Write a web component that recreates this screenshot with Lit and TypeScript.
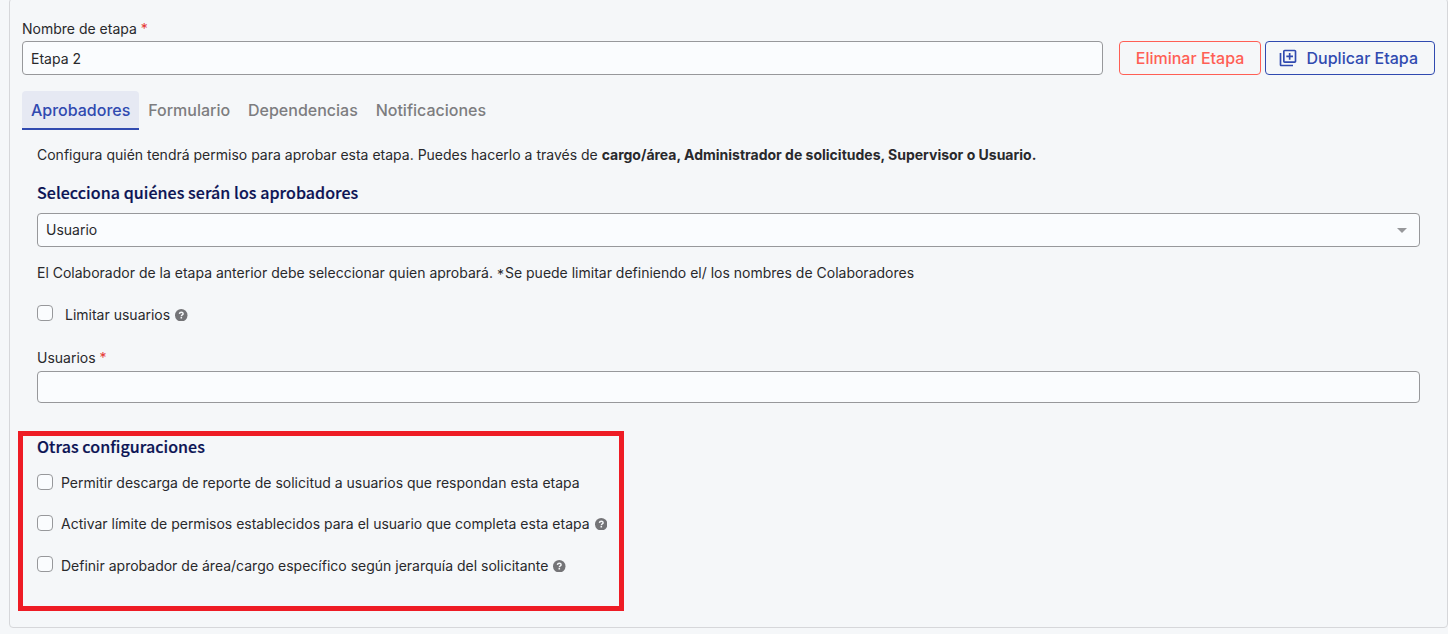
import { LitElement, html, css, svg, nothing } from 'lit';
import { customElement, property, state } from 'lit/decorators.js';
import { classMap } from 'lit/directives/class-map.js';

@customElement('check-option')
class CheckOption extends LitElement {
  @property() label = '';
  @property({ type: Boolean }) help = false;
  @property({ type: Boolean }) checked = false;

  static styles = css`
    :host {
      display: block;
    }

    .option {
      display: flex;
      align-items: flex-start;
      line-height: 20px;
    }

    .box {
      appearance: none;
      box-sizing: border-box;
      flex: none;
      width: 16px;
      height: 16px;
      margin: 0 var(--option-gap, 8px) 0 0;
      border: 1px solid #97989b;
      border-radius: 4px;
      background: #fafcfe;
    }

    .box:checked {
      background: #304ab0;
    }

    .text {
      margin-top: var(--option-shift, -1px);
      white-space: nowrap;
    }

    .help {
      flex: none;
      width: 12.5px;
      height: 12.5px;
      margin: calc(var(--option-shift, -1px) + 3.5px) 0 0 5px;
    }
  `;

  render() {
    return html`<label class="option">
      <input
        class="box"
        type="checkbox"
        .checked=${this.checked}
        @change=${this._toggle}
      />
      <span class="text">${this.label}</span>
      ${this.help
        ? html`<svg class="help" viewBox="0 0 12 12">
            <circle cx="6" cy="6" r="6" fill="#747477" />
            <path
              d="M4.2 4.6C4.4 3.6 5.1 3.1 6 3.1s1.8.5 1.8 1.5c0 1.1-1.7 1.1-1.7 2.3"
              fill="none"
              stroke="#f5f7f9"
              stroke-width="1.4"
            />
            <rect x="5.3" y="7.7" width="1.5" height="1.4" fill="#f5f7f9" />
          </svg>`
        : nothing}
    </label>`;
  }

  _toggle(event: Event) {
    this.checked = (event.target as HTMLInputElement).checked;
  }
}

@customElement('app-root')
class AppRoot extends LitElement {
  @state() activeTab = 'Aprobadores';

  tabs = ['Aprobadores', 'Formulario', 'Dependencias', 'Notificaciones'];

  static styles = css`
    :host {
      display: block;
      box-sizing: border-box;
      height: 634px;
      padding-left: 9px;
      overflow: hidden;
      background: #f5f7f9;
      color: #29292c;
      font: 14px/20px Inter, 'Liberation Sans', sans-serif;
    }

    * {
      box-sizing: border-box;
    }

    .card {
      height: 630px;
      margin-top: -2px;
      padding: 20px 12px 0;
      border: 1px solid #d6d7da;
      border-radius: 4px;
    }

    .name-row {
      display: flex;
      align-items: flex-end;
    }

    .field {
      flex: 1;
      display: flex;
      flex-direction: column;
      gap: 2px;
    }

    .required {
      color: #e53935;
    }

    .input {
      width: 100%;
      height: 34px;
      padding: 0 8px;
      border: 1px solid #97989b;
      border-radius: 4px;
      background: #fafcfe;
      color: inherit;
      font: inherit;
    }

    .input.short {
      height: 32px;
      margin-top: 1px;
    }

    .button {
      height: 34px;
      padding: 0 16px;
      border: 1px solid currentColor;
      border-radius: 4px;
      background: none;
      font: 500 16px/20px Inter, sans-serif;
      white-space: nowrap;
    }

    .danger {
      width: 142px;
      margin-left: 16px;
      padding: 0 0 0 1px;
      color: #ff5f55;
    }

    .primary {
      display: flex;
      align-items: center;
      gap: 9px;
      margin-left: 4px;
      padding-left: 12px;
      color: #304ab0;
    }

    .copy-icon {
      width: 20px;
      height: 20px;
    }

    .tabs {
      display: flex;
      margin-top: 16px;
    }

    .tab {
      height: 39px;
      padding: 0 8.95px;
      border: 0;
      border-bottom: 2px solid transparent;
      background: none;
      color: #7d7d80;
      font: 500 16px/20px Inter, sans-serif;
    }

    .tab.active {
      border-bottom-color: #304ab0;
      border-radius: 4px 4px 0 0;
      background: #e6e9f3;
      color: #304ab0;
    }

    .panel {
      padding: 15px 15px 0;
    }

    .text {
      margin: 0;
    }

    .title {
      margin: 0;
      color: #0b1354;
      font: 500 16px/20px 'Noto Sans CJK SC', sans-serif;
      letter-spacing: 0.06px;
      -webkit-text-stroke: 0.2px;
    }

    .approvers-title {
      margin: 17px 0 11px;
    }

    .select {
      display: flex;
      align-items: center;
      justify-content: space-between;
      padding: 0 12px 0 8px;
    }

    .arrow {
      border: 5px solid transparent;
      border-top-color: #97989b;
      border-bottom: 0;
    }

    .hint {
      margin: 16px 0 22px;
    }

    .star {
      display: inline-block;
      margin-right: 1px;
      line-height: 1;
      transform: translateY(2px);
    }

    .limit {
      --option-gap: 12px;
      --option-shift: 0px;
      margin-bottom: 23px;
    }

    .settings {
      width: 606px;
      height: 180px;
      margin: 28px 0 0 -19px;
      padding: 0 10px 0 14px;
      border: 5px solid #ee1c25;
    }

    .options {
      display: flex;
      flex-direction: column;
      gap: 22.2px;
      margin-top: 18px;
    }

    .options check-option:last-child {
      --option-shift: 0px;
    }
  `;

  render() {
    return html`<section class="card">
      <div class="name-row">
        <label class="field">
          <span>Nombre de etapa <span class="required">*</span></span>
          <input class="input" .value=${'Etapa 2'} />
        </label>
        <button class="button danger">Eliminar Etapa</button>
        <button class="button primary">
          ${this._copyIcon()}<span>Duplicar Etapa</span>
        </button>
      </div>
      <nav class="tabs">
        ${this.tabs.map(
          tab => html`<button
            class=${classMap({ tab: true, active: tab === this.activeTab })}
            @click=${() => (this.activeTab = tab)}
          >
            ${tab}
          </button>`
        )}
      </nav>
      <div class="panel">
        <p class="text">
          Configura quién tendrá permiso para aprobar esta etapa. Puedes hacerlo
          a través de
          <b>cargo/área, Administrador de solicitudes, Supervisor o Usuario.</b>
        </p>
        <h2 class="title approvers-title">
          Selecciona quiénes serán los aprobadores
        </h2>
        <div class="input select">
          <span>Usuario</span>
          <span class="arrow"></span>
        </div>
        <p class="text hint">
          El Colaborador de la etapa anterior debe seleccionar quien aprobará.
          <span class="star">*</span>Se puede limitar definiendo el/ los nombres
          de Colaboradores
        </p>
        <check-option class="limit" label="Limitar usuarios" help></check-option>
        <label class="field">
          <span>Usuarios <span class="required">*</span></span>
          <input class="input short" />
        </label>
        <div class="settings">
          <h2 class="title">Otras configuraciones</h2>
          <div class="options">
            <check-option
              label="Permitir descarga de reporte de solicitud a usuarios que respondan esta etapa"
            ></check-option>
            <check-option
              label="Activar límite de permisos establecidos para el usuario que completa esta etapa"
              help
            ></check-option>
            <check-option
              label="Definir aprobador de área/cargo específico según jerarquía del solicitante"
              help
            ></check-option>
          </div>
        </div>
      </div>
    </section>`;
  }

  _copyIcon() {
    return html`<svg class="copy-icon" viewBox="0 0 24 24" fill="currentColor">
      ${svg`<path
        d="M4 6H2v14c0 1.1.9 2 2 2h14v-2H4V6zm16-4H8c-1.1 0-2 .9-2 2v12c0 1.1.9 2 2 2h12c1.1 0 2-.9 2-2V4c0-1.1-.9-2-2-2zm0 14H8V4h12v12zm-7-2h2v-3h3V9h-3V6h-2v3h-3v2h3v3z"
      />`}
    </svg>`;
  }
}
